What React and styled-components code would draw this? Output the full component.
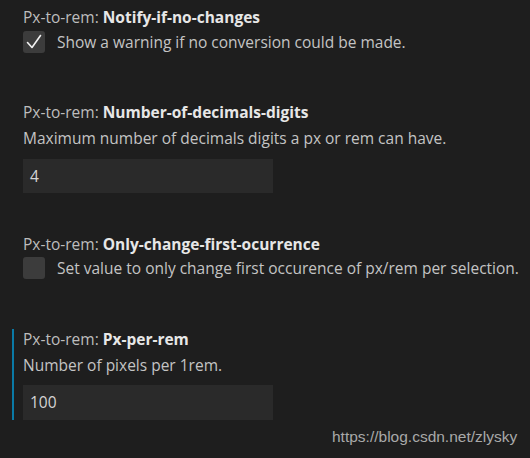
import React from 'react'
import styled, { createGlobalStyle } from 'styled-components'

const Global = createGlobalStyle`
html, body {
  margin: 0;
  background: #1e1e1e;
}
body {
  font-family: "Open Sans", "Noto Sans", sans-serif;
  font-size: 15.5px;
}
`

const Page = styled.div`
position: relative;
width: 530px;
height: 458px;
overflow: hidden;
padding-top: 7px;
box-sizing: border-box;
`

const Item = styled.div`
margin-left: 12px;
padding-left: 9px;
border-left: 2px solid ${props => props.focused ? '#0a7aa6' : 'transparent'};
margin-bottom: ${props => props.gap}px;
`

const Title = styled.div`
line-height: 20px;
height: 20px;
color: #bdbdbd;
white-space: nowrap;
b {
  color: #e7e7e7;
  font-weight: 700;
}
`

const Desc = styled.div`
margin-top: 6px;
line-height: 20px;
color: #c4c4c4;
white-space: nowrap;
`

const CheckRow = styled.label`
display: flex;
align-items: center;
gap: 12px;
margin-top: ${props => props.top}px;
color: #c4c4c4;
white-space: nowrap;
`

const Box = styled.span`
width: 22px;
height: 22px;
border-radius: 3px;
background: #3c3c3c;
display: flex;
align-items: center;
justify-content: center;
flex: none;
`

const Input = styled.div`
margin-top: ${props => props.top}px;
width: 250px;
height: ${props => props.h}px;
box-sizing: border-box;
padding-left: 7px;
line-height: ${props => props.h}px;
background: #2a2a2a;
color: #d4d4d4;
`

const Watermark = styled.div`
position: absolute;
left: 332px;
top: 428px;
font-family: "Liberation Sans", Arial, sans-serif;
font-size: 15.5px;
color: #a9a9a9;
`

const Check = () => (
  <svg width="20" height="20" viewBox="0 0 20 20" fill="none" stroke="#f2f2f2" strokeWidth="1.6" strokeLinecap="round" strokeLinejoin="round">
    <path d="M3.5 10.5l4.5 5L16.5 3.5" />
  </svg>
)

export default function App() {
  return (
    <Page>
      <Global />
      <Item gap={49}>
        <Title>Px-to-rem: <b>Notify-if-no-changes</b></Title>
        <CheckRow top={4}>
          <Box><Check /></Box>
          Show a warning if no conversion could be made.
        </CheckRow>
      </Item>
      <Item gap={41}>
        <Title>Px-to-rem: <b>Number-of-decimals-digits</b></Title>
        <Desc>Maximum number of decimals digits a px or rem can have.</Desc>
        <Input top={11} h={34}>4</Input>
      </Item>
      <Item gap={50}>
        <Title>Px-to-rem: <b>Only-change-first-ocurrence</b></Title>
        <CheckRow top={3}>
          <Box />
          Set value to only change first occurence of px/rem per selection.
        </CheckRow>
      </Item>
      <Item gap={0} focused>
        <Title>Px-to-rem: <b>Px-per-rem</b></Title>
        <Desc>Number of pixels per 1rem.</Desc>
        <Input top={10} h={35}>100</Input>
      </Item>
      <Watermark>https://blog.csdn.net/zlysky</Watermark>
    </Page>
  )
}
